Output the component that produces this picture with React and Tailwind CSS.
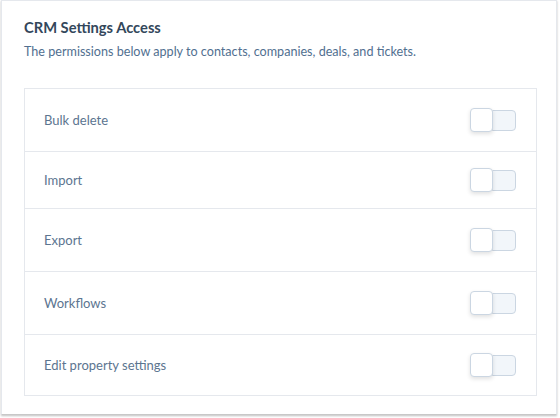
import React from 'react';

// row heights follow the screenshot (the Import row is a little shorter)
const permissions = [
    { label: 'Bulk delete', h: 'h-[62px]' },
    { label: 'Import', h: 'h-[57px]' },
    { label: 'Export', h: 'h-[63px]' },
    { label: 'Workflows', h: 'h-[63px]' },
    { label: 'Edit property settings', h: 'h-[61px]' },
];

const Toggle = () => (
    <div className="flex items-center">
        <div className="w-[23px] h-[24px] bg-white border border-[#cbd6e2] rounded-[4px] shadow-[0_2px_4px_rgba(0,0,0,0.12)] z-10" />
        <div className="w-[24px] h-[21px] -ml-[1px] bg-[#f2f6fa] border border-[#cbd6e2] rounded-r-[4px]" />
    </div>
);

export default function App() {
    return (
        <div className="w-[560px] h-[418px] bg-white font-['Lato',sans-serif]">
            <div className="ml-[1px] w-[556px] h-[415px] bg-white border border-[#e5e8ed] border-b-[#c8c8c8] shadow-[0_1px_2px_rgba(0,0,0,0.25)] px-[22px] pt-[16px]">
                <h2 className="text-[14.7px] font-bold text-[#33475b] leading-[20px]">CRM Settings Access</h2>
                <p className="mt-[6px] text-[12.6px] text-[#516f90] leading-[18px]">The permissions below apply to contacts, companies, deals, and tickets.</p>
                <div className="mt-[27px] w-[513px] border border-[#e5e8ed]">
                    {permissions.map((p, i) => (
                        <div
                            key={p.label}
                            className={`flex items-center justify-between ${p.h} pl-[19px] pr-[20px] ${i > 0 ? 'border-t border-[#e5e8ed]' : ''}`}
                        >
                            <span className="text-[13px] text-[#5c7590] pt-[2px]">{p.label}</span>
                            <Toggle />
                        </div>
                    ))}
                </div>
            </div>
        </div>
    );
}
